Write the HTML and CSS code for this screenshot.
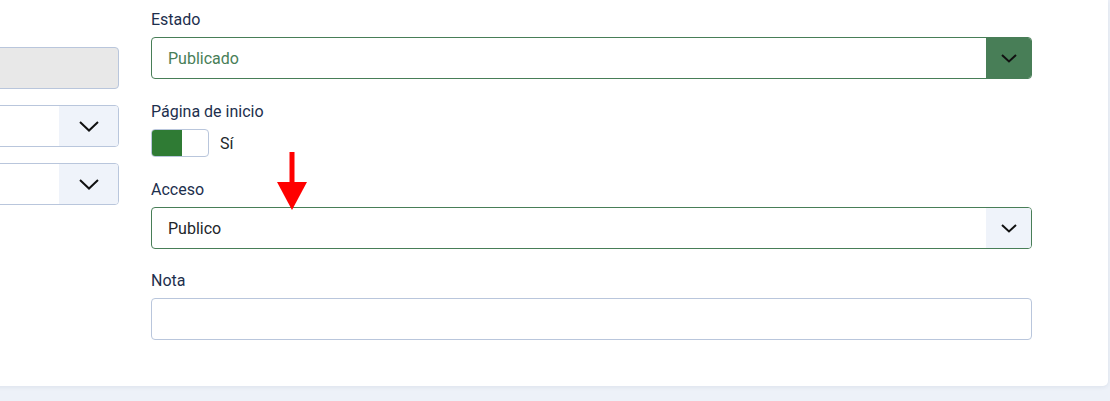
FILE: index.html
```html
<html lang="es">
<head>
  <meta charset="UTF-8">
  <meta name="viewport" content="width=device-width, initial-scale=1.0">
  <title>Editar elemento</title>
  <link rel="stylesheet" href="styles.css">
</head>
<body>
  <div class="card">
    <div class="col-left">
      <div class="field field-readonly"></div>
      <div class="select">
        <span class="select-value"></span>
        <span class="select-btn select-btn-wide">
          <svg width="20" height="11" viewBox="0 0 20 11"><polyline points="1,1 10,9.5 19,1"/></svg>
        </span>
      </div>
      <div class="select">
        <span class="select-value"></span>
        <span class="select-btn select-btn-wide">
          <svg width="20" height="11" viewBox="0 0 20 11"><polyline points="1,1 10,9.5 19,1"/></svg>
        </span>
      </div>
    </div>

    <div class="col-main">
      <div class="group">
        <label>Estado</label>
        <div class="select select-success">
          <span class="select-value">Publicado</span>
          <span class="select-btn">
            <svg width="16" height="9" viewBox="0 0 16 9"><polyline points="1,1 8,7.5 15,1"/></svg>
          </span>
        </div>
      </div>

      <div class="group">
        <label>Página de inicio</label>
        <div class="switch-row">
          <span class="switch"><span class="switch-on"></span></span>
          <span class="switch-text">Sí</span>
        </div>
      </div>

      <div class="group group-tight">
        <label>Acceso</label>
        <div class="select select-valid">
          <span class="select-value">Publico</span>
          <span class="select-btn">
            <svg width="16" height="9" viewBox="0 0 16 9"><polyline points="1,1 8,7.5 15,1"/></svg>
          </span>
        </div>
      </div>

      <div class="group">
        <label>Nota</label>
        <div class="field"></div>
      </div>
    </div>

    <!-- flecha de anotación -->
    <svg class="marker" width="32" height="62" viewBox="0 0 32 62">
      <rect x="13.5" y="2" width="5" height="32" fill="#ff0000"/>
      <polygon points="1,32 31,32 16,60" fill="#ff0000"/>
    </svg>
  </div>
</body>
</html>
```

FILE: styles.css
```css
body {
  margin: 0;
  background: #edf1f8;
  font-family: Roboto, "Liberation Sans", sans-serif;
  font-size: 16px;
  overflow: hidden;
}
.card {
  position: relative;
  box-sizing: border-box;
  width: 1128px;
  margin-left: -20px;
  padding: 8px 76px 46px 0;
  background: #fff;
  border-radius: 0 0 5px 0;
  box-shadow: 0 1px 4px rgba(30, 50, 90, 0.08);
  display: grid;
  grid-template-columns: 139px 881px;
  column-gap: 32px;
}
.col-left {
  padding-top: 39px;
  display: flex;
  flex-direction: column;
  gap: 16px;
}
.group {
  margin-bottom: 21px;
}
.group-tight {
  margin-bottom: 20px;
}
.group:last-child {
  margin-bottom: 0;
}
label {
  display: block;
  line-height: 24px;
  margin-bottom: 5px;
  color: #1d2f4d;
}
.field {
  box-sizing: border-box;
  height: 42px;
  border: 1px solid #b9c6dc;
  border-radius: 4px;
  background: #fff;
}
.field-readonly {
  background: #e8e8e8;
}
.select {
  box-sizing: border-box;
  height: 42px;
  display: flex;
  border: 1px solid #b9c6dc;
  border-radius: 4px;
  overflow: hidden;
  background: #fff;
}
.select-value {
  flex: 1;
  display: flex;
  align-items: center;
  padding: 0 16px;
  color: #22262a;
}
.select-btn {
  width: 45px;
  display: flex;
  align-items: center;
  justify-content: center;
  background: #eff3fa;
}
.select-btn-wide {
  width: 59px;
}
.select-btn svg polyline {
  fill: none;
  stroke: #111;
  stroke-width: 2;
}
.select-success {
  border-color: #487e57;
}
.select-success .select-value {
  color: #487e57;
}
.select-success .select-btn {
  background: #487e57;
}
.select-valid {
  border-color: #487e57;
}
.switch-row {
  display: flex;
  align-items: center;
  gap: 11px;
}
.switch {
  box-sizing: border-box;
  width: 58px;
  height: 28px;
  border: 1px solid #b9c6dc;
  border-radius: 4px;
  overflow: hidden;
  background: #fff;
}
.switch-on {
  display: block;
  width: 30px;
  height: 100%;
  background: #2f7b34;
}
.switch-text {
  color: #22262a;
}
.marker {
  position: absolute;
  left: 296px;
  top: 150px;
}
```
